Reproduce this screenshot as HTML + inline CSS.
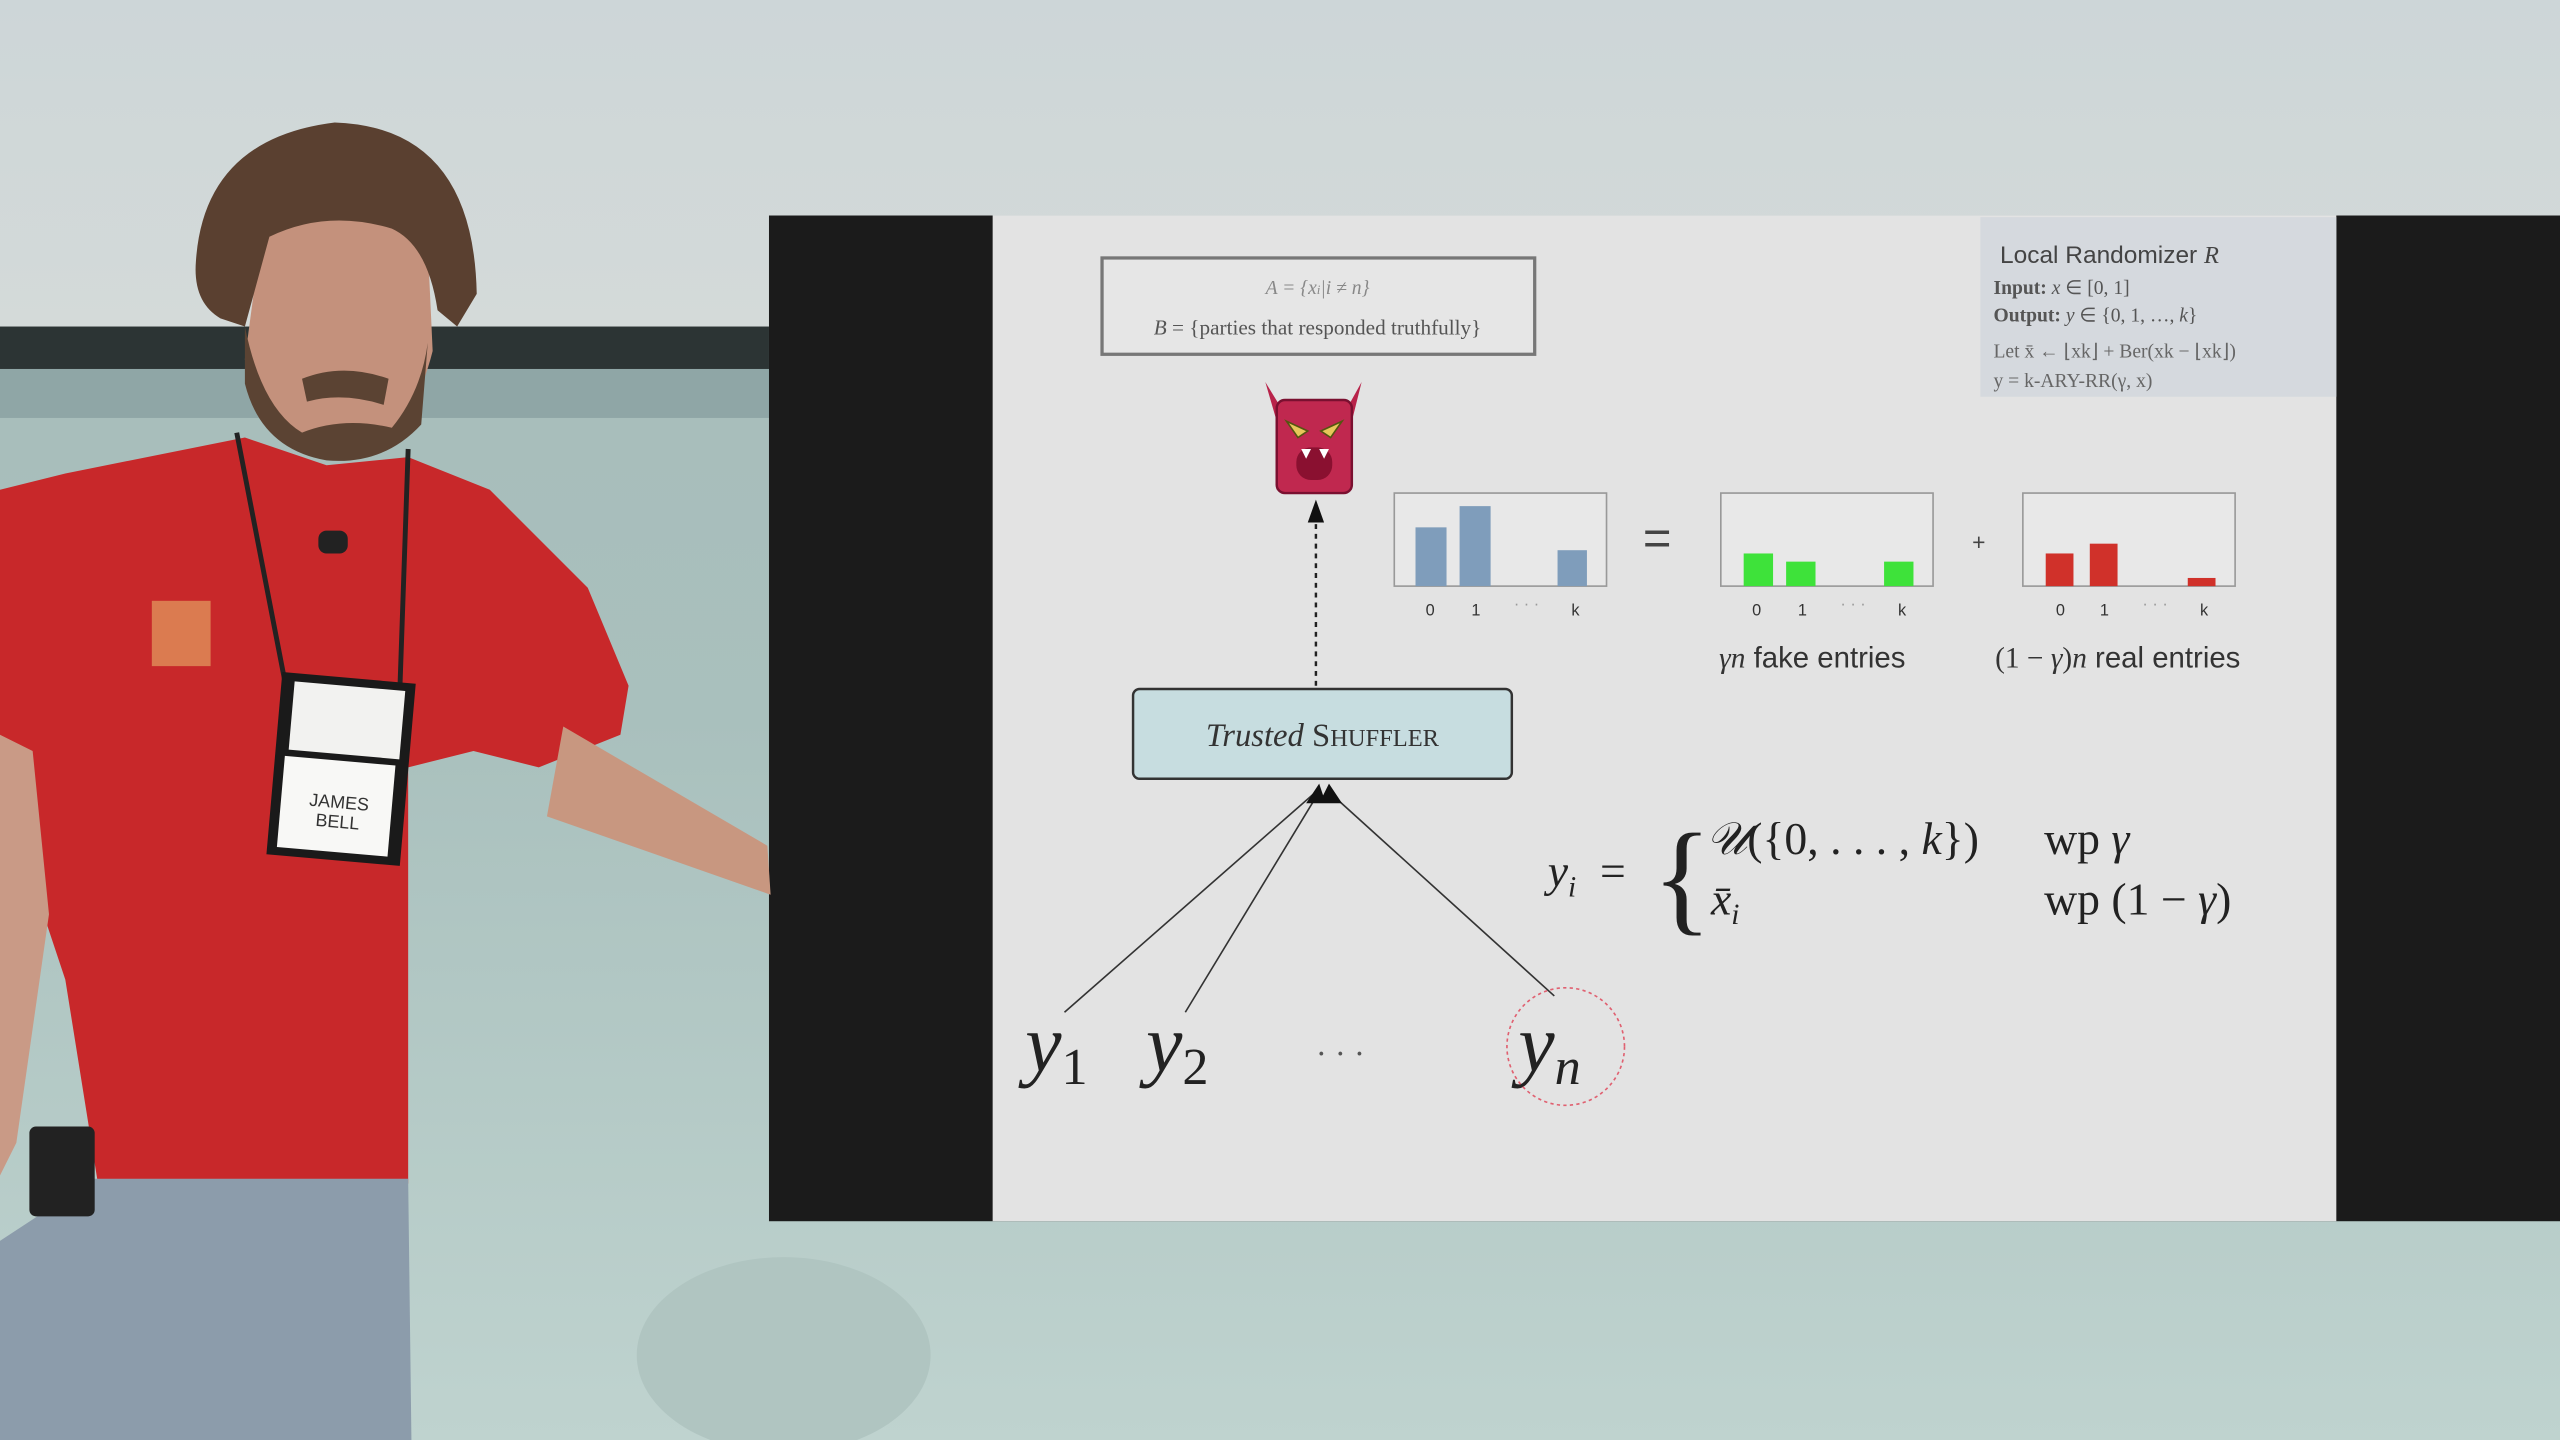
<!DOCTYPE html>
<html><head><meta charset="utf-8"><style>
html,body{margin:0;padding:0;width:2560px;height:1440px;overflow:hidden;background:#b8cac8}
svg{display:block}
</style></head><body>
<svg width="2560" height="1440" viewBox="0 0 1568 882" preserveAspectRatio="none" xmlns="http://www.w3.org/2000/svg">
<defs>
<linearGradient id="wall" x1="0" y1="0" x2="0" y2="1">
<stop offset="0" stop-color="#a7bab8"/><stop offset="0.5" stop-color="#a9c0bd"/><stop offset="1" stop-color="#bfd3cf"/>
</linearGradient>
<linearGradient id="top" x1="0" y1="0" x2="0" y2="1">
<stop offset="0" stop-color="#cdd6d8"/><stop offset="1" stop-color="#d4dad9"/>
</linearGradient>
</defs>
<rect width="1568" height="882" fill="url(#wall)"/>
<rect width="1568" height="205" fill="url(#top)"/>
<rect x="0" y="200" width="471" height="26" fill="#2c3434"/>
<rect x="0" y="226" width="471" height="30" fill="#8fa6a6"/>
<ellipse cx="480" cy="830" rx="90" ry="60" fill="#b0c5c1"/>
<!-- screen -->
<rect x="471" y="132" width="1097" height="616" fill="#1b1b1b"/>
<rect x="608" y="132" width="823" height="616" fill="#e3e3e3"/>
<!-- A/B box -->
<rect x="675" y="158" width="265" height="59" fill="#e6e6e6" stroke="#777" stroke-width="2"/>
<text x="807" y="180" font-family="Liberation Serif,serif" font-size="12" font-style="italic" fill="#888" text-anchor="middle">A = {x<tspan font-size="8">i</tspan>|i ≠ n}</text>
<text x="807" y="205" font-family="Liberation Serif,serif" font-size="13" fill="#555" text-anchor="middle"><tspan font-style="italic">B</tspan> = {parties that responded truthfully}</text>
<!-- local randomizer -->
<rect x="1213" y="133" width="218" height="110" fill="#d5d9de"/>
<text x="1225" y="161" font-family="Liberation Sans,sans-serif" font-size="15" fill="#444">Local Randomizer <tspan font-family="Liberation Serif,serif" font-style="italic">R</tspan></text>
<text x="1221" y="180" font-family="Liberation Serif,serif" font-size="12" fill="#555"><tspan font-weight="bold">Input:</tspan> <tspan font-style="italic">x</tspan> ∈ [0, 1]</text>
<text x="1221" y="197" font-family="Liberation Serif,serif" font-size="12" fill="#555"><tspan font-weight="bold">Output:</tspan> <tspan font-style="italic">y</tspan> ∈ {0, 1, …, <tspan font-style="italic">k</tspan>}</text>
<text x="1221" y="219" font-family="Liberation Serif,serif" font-size="12" fill="#666">Let x̄ ← ⌊xk⌋ + Ber(xk − ⌊xk⌋)</text>
<text x="1221" y="237" font-family="Liberation Serif,serif" font-size="12" fill="#666">y = k-ARY-RR(γ, x)</text>
<!-- devil -->
<path d="M775 234 L786 252 L824 252 L834 234 L828 258 L828 300 L782 300 L782 258 Z" fill="#b8234a"/>
<rect x="782" y="245" width="46" height="57" rx="5" fill="#c0284f" stroke="#7a1030" stroke-width="1.5"/>
<path d="M788 258 L801 264 L795 268 Z M822 258 L809 264 L815 268 Z" fill="#e8c65a" stroke="#551" stroke-width="1"/>
<rect x="794" y="274" width="22" height="20" rx="9" fill="#8a1030"/>
<path d="M797 275 l3 6 l3 -6 Z M808 275 l3 6 l3 -6 Z" fill="#fff"/>
<!-- dotted arrow -->
<line x1="806" y1="420" x2="806" y2="314" stroke="#222" stroke-width="1.5" stroke-dasharray="3,3"/>
<path d="M801 320 L806 306 L811 320 Z" fill="#111"/>
<!-- histograms -->
<g font-family="Liberation Sans,sans-serif" font-size="10" fill="#333" text-anchor="middle">
<rect x="854" y="302" width="130" height="57" fill="#e8e8e8" stroke="#999"/>
<rect x="867" y="323" width="19" height="36" fill="#7f9dbb"/>
<rect x="894" y="310" width="19" height="49" fill="#7f9dbb"/>
<rect x="954" y="337" width="18" height="22" fill="#7f9dbb"/>
<text x="876" y="377">0</text><text x="904" y="377">1</text><text x="935" y="373" fill="#999">· · ·</text><text x="965" y="377">k</text>
<rect x="1054" y="302" width="130" height="57" fill="#e8e8e8" stroke="#999"/>
<rect x="1068" y="339" width="18" height="20" fill="#3ee23a"/>
<rect x="1094" y="344" width="18" height="15" fill="#3ee23a"/>
<rect x="1154" y="344" width="18" height="15" fill="#3ee23a"/>
<text x="1076" y="377">0</text><text x="1104" y="377">1</text><text x="1135" y="373" fill="#999">· · ·</text><text x="1165" y="377">k</text>
<rect x="1239" y="302" width="130" height="57" fill="#e8e8e8" stroke="#999"/>
<rect x="1253" y="339" width="17" height="20" fill="#d0312a"/>
<rect x="1280" y="333" width="17" height="26" fill="#d0312a"/>
<rect x="1340" y="354" width="17" height="5" fill="#d0312a"/>
<text x="1262" y="377">0</text><text x="1289" y="377">1</text><text x="1320" y="373" fill="#999">· · ·</text><text x="1350" y="377">k</text>
</g>
<text x="1015" y="340" font-family="Liberation Sans,sans-serif" font-size="30" fill="#444" text-anchor="middle">=</text>
<text x="1212" y="337" font-family="Liberation Sans,sans-serif" font-size="14" fill="#444" text-anchor="middle">+</text>
<text x="1053" y="409" font-family="Liberation Sans,sans-serif" font-size="18" fill="#333"><tspan font-family="Liberation Serif,serif" font-style="italic">γn</tspan>  fake entries</text>
<text x="1222" y="409" font-family="Liberation Sans,sans-serif" font-size="18" fill="#333"><tspan font-family="Liberation Serif,serif">(1 − <tspan font-style="italic">γ</tspan>)<tspan font-style="italic">n</tspan></tspan> real entries</text>
<!-- shuffler -->
<rect x="694" y="422" width="232" height="55" rx="4" fill="#c7dde0" stroke="#333" stroke-width="1.5"/>
<text x="810" y="457" font-family="Liberation Serif,serif" font-size="20" fill="#333" text-anchor="middle"><tspan font-style="italic">Trusted</tspan> S<tspan font-size="15">HUFFLER</tspan></text>
<!-- arrows -->
<g stroke="#333" stroke-width="1">
<line x1="652" y1="620" x2="806" y2="485"/>
<line x1="726" y1="620" x2="808" y2="485"/>
<line x1="952" y1="610" x2="814" y2="485"/>
</g>
<path d="M800 492 L808 480 L812 492 Z M808 492 L814 480 L822 492 Z" fill="#111"/>
<!-- equation -->
<g font-family="Liberation Serif,serif" fill="#222">
<text x="948" y="543" font-size="28" font-style="italic">y<tspan font-size="18" dy="6">i</tspan></text>
<text x="980" y="543" font-size="28">=</text>
<text x="1012" y="563" font-size="76">{</text>
<text x="1045" y="523" font-size="28"><tspan font-style="italic">𝒰</tspan>({0, . . . , <tspan font-style="italic">k</tspan>})</text>
<text x="1252" y="523" font-size="28">wp <tspan font-style="italic">γ</tspan></text>
<text x="1048" y="560" font-size="28" font-style="italic">x̄<tspan font-size="18" dy="6">i</tspan></text>
<text x="1252" y="560" font-size="28">wp (1 − <tspan font-style="italic">γ</tspan>)</text>
<text x="628" y="656" font-size="50" font-style="italic">y<tspan font-size="32" font-style="normal" dy="8">1</tspan></text>
<text x="702" y="656" font-size="50" font-style="italic">y<tspan font-size="32" font-style="normal" dy="8">2</tspan></text>
<text x="806" y="652" font-size="20" fill="#555">·  ·  ·</text>
<text x="930" y="656" font-size="50" font-style="italic">y<tspan font-size="32" dy="8">n</tspan></text>
</g>
<circle cx="959" cy="641" r="36" fill="none" stroke="#e06070" stroke-width="1" stroke-dasharray="2,2"/>
<!-- person -->
<path d="M0 300 L40 290 L150 268 L200 285 L250 280 L300 300 L360 360 L385 420 L380 450 L330 470 L290 460 L250 470 L250 725 L60 725 L40 600 L20 540 L0 540 Z" fill="#c8282a"/>
<path d="M345 445 L470 518 L472 548 L335 500 Z" fill="#c89780"/>
<path d="M0 450 L20 460 L30 560 L10 700 L0 720 Z" fill="#c99a86"/>
<path d="M58 722 L250 722 L252 882 L0 882 L0 760 Z" fill="#8c9cab"/>
<!-- head -->
<path d="M160 145 Q210 120 262 150 L265 215 Q250 275 205 278 Q160 270 150 220 Z" fill="#c4917c"/>
<path d="M150 200 Q160 250 185 265 Q210 255 240 262 Q258 240 262 210 L258 260 Q235 285 200 282 Q160 275 150 235 Z" fill="#5b4333"/>
<path d="M185 232 Q210 222 238 232 L235 248 Q210 240 188 246 Z" fill="#5b4333"/>
<path d="M120 160 Q125 85 205 75 Q290 78 292 180 L280 200 L268 190 Q262 150 240 140 Q200 128 165 145 L150 200 L135 195 Q118 185 120 160Z" fill="#5a4030"/>
<path d="M145 265 L175 420 M250 275 L245 420" stroke="#222" stroke-width="3" fill="none"/>
<rect x="168" y="415" width="82" height="112" fill="#1a1a1a" transform="rotate(5 209 470)"/>
<rect x="176" y="420" width="68" height="42" fill="#f2f2f0" transform="rotate(5 209 470)"/>
<rect x="174" y="466" width="68" height="56" fill="#f8f8f6" transform="rotate(5 209 470)"/>
<text x="207" y="495" font-family="Liberation Sans,sans-serif" font-size="11" fill="#333" text-anchor="middle" transform="rotate(5 207 500)">JAMES</text>
<text x="207" y="507" font-family="Liberation Sans,sans-serif" font-size="11" fill="#333" text-anchor="middle" transform="rotate(5 207 500)">BELL</text>
<rect x="18" y="690" width="40" height="55" rx="4" fill="#222"/>
<rect x="93" y="368" width="36" height="40" fill="#e8b26a" opacity="0.6"/>
<rect x="195" y="325" width="18" height="14" rx="5" fill="#222"/>
</svg>
</body></html>
